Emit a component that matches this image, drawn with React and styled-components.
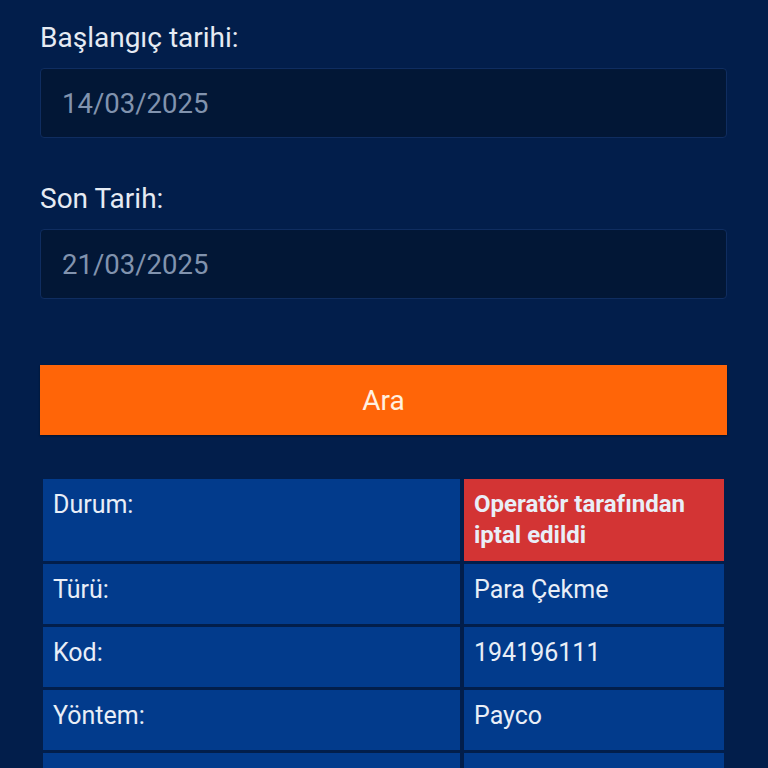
import React from 'react';
import styled, { createGlobalStyle } from 'styled-components';

const GlobalStyle = createGlobalStyle`
  html, body {
    margin: 0;
    padding: 0;
    background: #021e4b;
    font-family: Roboto, "Noto Sans", Arial, sans-serif;
  }
`;

const Page = styled.div`
  padding: 22px 41px 0 40px;
  box-sizing: border-box;
  overflow: hidden;
  height: 768px;
`;

const Field = styled.div`
  display: flex;
  flex-direction: column;
  margin-bottom: 45px;
`;

const Label = styled.label`
  color: #e6ebf3;
  font-size: 28px;
  line-height: 32px;
  margin-bottom: 14px;
`;

const DateInput = styled.div`
  height: 70px;
  box-sizing: border-box;
  border: 1px solid #0f2d60;
  border-radius: 4px;
  background: #021736;
  color: #8193ae;
  font-size: 27.5px;
  display: flex;
  align-items: center;
  padding-left: 21px;
`;

const SearchButton = styled.button`
  display: block;
  width: 100%;
  height: 70px;
  margin-top: 66px;
  border: none;
  border-radius: 0;
  background: #ff6508;
  color: #fff1e0;
  font-family: inherit;
  font-size: 28px;
  box-shadow: 0 1px 2px rgba(0, 0, 0, 0.4);
`;

const Table = styled.div`
  display: grid;
  grid-template-columns: 417px 1fr;
  gap: 3px 4px;
  margin-top: 44px;
  padding: 0 3px 0 3px;
`;

const Cell = styled.div`
  background: ${p => (p.$status ? '#d33434' : '#023b8c')};
  color: #e9eef7;
  font-size: ${p => (p.$status ? '24px' : '25px')};
  font-weight: ${p => (p.$status ? 700 : 400)};
  line-height: 31px;
  padding: 10px;
  min-height: 60px;
  box-sizing: border-box;
`;

const rows = [
  ['Durum:', 'Operatör tarafından iptal edildi', true],
  ['Türü:', 'Para Çekme'],
  ['Kod:', '194196111'],
  ['Yöntem:', 'Payco'],
  ['', ''],
];

export default function App() {
  return (
    <>
      <GlobalStyle />
      <Page>
        <Field>
          <Label>Başlangıç tarihi:</Label>
          <DateInput>14/03/2025</DateInput>
        </Field>
        <Field>
          <Label>Son Tarih:</Label>
          <DateInput>21/03/2025</DateInput>
        </Field>
        <SearchButton>Ara</SearchButton>
        <Table>
          {rows.map(([k, v, status], i) => (
            <React.Fragment key={i}>
              <Cell>{k}</Cell>
              <Cell $status={status}>{v}</Cell>
            </React.Fragment>
          ))}
        </Table>
      </Page>
    </>
  );
}
